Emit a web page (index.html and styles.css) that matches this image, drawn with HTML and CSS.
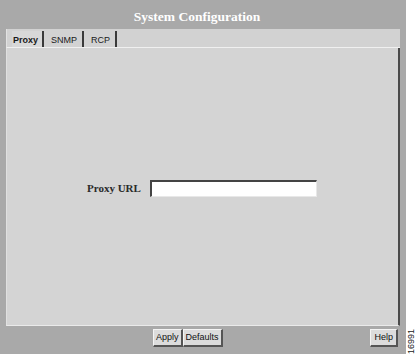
FILE: index.html
```html
<!DOCTYPE html>
<html>
<head>
<meta charset="utf-8">
<link rel="stylesheet" href="styles.css">
</head>
<body>
<div class="page">
  <div class="frame">
    <div class="title">System Configuration</div>
    <div class="window">
      <div class="tabbar">
        <div class="tab active">Proxy</div>
        <div class="tab">SNMP</div>
        <div class="tab">RCP</div>
      </div>
      <div class="panel">
        <div class="field">
          <label class="label">Proxy URL</label>
          <div class="input"></div>
        </div>
      </div>
    </div>
    <div class="footer">
      <div class="btngroup">
        <div class="btn">Apply</div>
        <div class="btn">Defaults</div>
      </div>
      <div class="btn help">Help</div>
    </div>
  </div>
  <div class="strip"><span class="figno">16991</span></div>
</div>
</body>
</html>
```
FILE: styles.css
```css
html, body {
  margin: 0;
  padding: 0;
  background: #ffffff;
}
.page {
  display: flex;
  width: 416px;
  height: 354px;
}
.frame {
  width: 406px;
  height: 354px;
  background: #a9a9a9;
  display: flex;
  flex-direction: column;
}
.title {
  height: 29px;
  box-sizing: border-box;
  padding-top: 9px;
  text-align: center;
  padding-right: 12px;
  font-family: "Liberation Sans", serif;
  font-family: "Liberation Serif", serif;
  font-weight: bold;
  font-size: 13.5px;
  line-height: 16px;
  color: #ffffff;
}
.window {
  margin-left: 6px;
  width: 394px;
  display: flex;
  flex-direction: column;
}
.tabbar {
  height: 18px;
  background: #d2d2d2;
  border-left: 1px solid #e2e2e2;
  border-bottom: 1px solid #f0f0f0;
  display: flex;
  align-items: stretch;
  padding-left: 5px;
}
.tab {
  font-family: "Liberation Sans", Arial, sans-serif;
  font-size: 9px;
  line-height: 15px;
  padding: 2px 5px 0 7px;
  margin-top: 2px;
  color: #1a1a1a;
  border-right: 2px solid #3a3a3a;
}
.tab.active {
  font-weight: bold;
  background: #d8d8d8;
  padding-left: 1px;
  padding-right: 4px;
}
.panel {
  height: 277px;
  background: #d4d4d4;
  border-left: 1px solid #e0e0e0;
  border-right: 2px solid #4a4a4a;
  border-bottom: 1px solid #eaeaea;
  display: flex;
  align-items: center;
  justify-content: flex-start;
  padding-left: 80px;
}
.field {
  display: flex;
  align-items: center;
  gap: 9px;
  margin-top: 3px;
}
.label {
  font-family: "Liberation Serif", serif;
  font-weight: bold;
  font-size: 11px;
  color: #2a2a2a;
}
.input {
  width: 164px;
  height: 14px;
  background: #ffffff;
  border-top: 2px solid #444444;
  border-left: 2px solid #444444;
  border-right: 1px solid #e8e8e8;
  border-bottom: 1px solid #e8e8e8;
}
.footer {
  display: flex;
  align-items: flex-start;
  padding-top: 3px;
  padding-left: 153px;
  padding-right: 8px;
}
.btngroup {
  display: flex;
  flex: 1;
}
.btn {
  font-family: "Liberation Sans", Arial, sans-serif;
  font-size: 9px;
  line-height: 15px;
  height: 15px;
  padding: 0 2px;
  background: #dcdcdc;
  color: #111111;
  border-top: 1px solid #f4f4f4;
  border-left: 1px solid #f4f4f4;
  border-right: 2px solid #555555;
  border-bottom: 2px solid #555555;
}
.help {
  padding: 0 3px;
}
.strip {
  width: 10px;
  height: 354px;
  display: flex;
  justify-content: flex-start;
  align-items: flex-end;
}
.figno {
  writing-mode: vertical-rl;
  transform: rotate(180deg);
  font-family: "Liberation Sans", Arial, sans-serif;
  font-size: 9px;
  line-height: 9px;
  color: #222222;
  margin-left: 1px;
}
```
